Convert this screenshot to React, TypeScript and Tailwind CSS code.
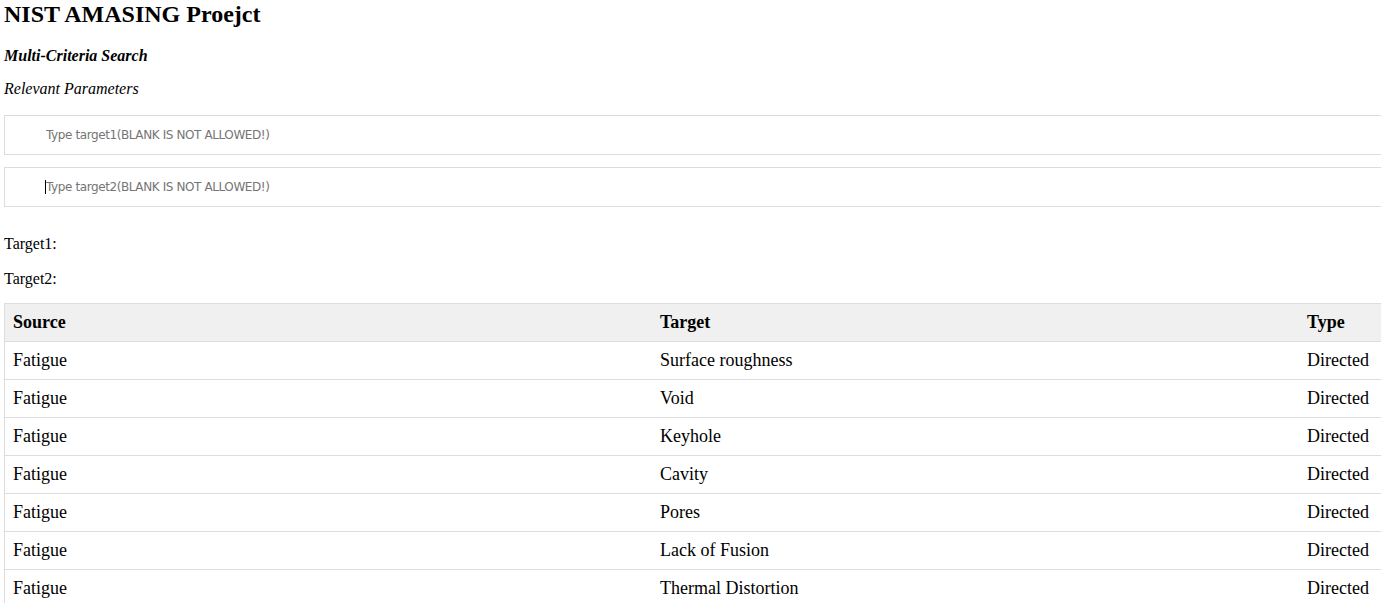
const rows: [string, string, string][] = [
  ["Fatigue", "Surface roughness", "Directed"],
  ["Fatigue", "Void", "Directed"],
  ["Fatigue", "Keyhole", "Directed"],
  ["Fatigue", "Cavity", "Directed"],
  ["Fatigue", "Pores", "Directed"],
  ["Fatigue", "Lack of Fusion", "Directed"],
  ["Fatigue", "Thermal Distortion", "Directed"],
];

const serif = "font-['Times_New_Roman','Liberation_Serif',serif]";

export default function App() {
  return (
    <div className={`w-full overflow-x-clip bg-white text-black ${serif}`}>
      <div className="w-[1400px] pl-[4px]">
        <h1 className="text-[24px] leading-[28px] font-bold">NIST AMASING Proejct</h1>

        <h4 className="mt-[19px] text-[16px] leading-[18px] font-bold italic">Multi-Criteria Search</h4>

        <p className="mt-[15px] text-[16px] leading-[18px] italic">Relevant Parameters</p>

        <input
          type="text"
          placeholder="Type target1(BLANK IS NOT ALLOWED!)"
          className="mt-[17px] block h-[40px] w-full border border-[#dcdcdc] pl-[41px] text-[12px] tracking-[-0.4px] font-['DejaVu_Sans',Tahoma,sans-serif] outline-none placeholder:text-[#757575]"
        />
        <div className="relative mt-[12px]">
          <input
            type="text"
            placeholder="Type target2(BLANK IS NOT ALLOWED!)"
            className="block h-[40px] w-full border border-[#dcdcdc] pl-[41px] text-[12px] tracking-[-0.4px] font-['DejaVu_Sans',Tahoma,sans-serif] outline-none placeholder:text-[#757575]"
          />
          {/* text caret of the focused field */}
          <span className="absolute left-[41px] top-[13px] h-[14px] w-px bg-black" />
        </div>

        <p className="mt-[28px] text-[16px] leading-[18px]">Target1:</p>
        <p className="mt-[17px] text-[16px] leading-[18px]">Target2:</p>

        <div className="mt-[15px] border-t border-l border-[#dddddd] text-[18px]">
          <div className="grid grid-cols-[647px_647px_1fr] h-[38px] items-center border-b border-[#dddddd] bg-[#f0f0f0] font-bold">
            <div className="pl-[8px]">Source</div>
            <div className="pl-[8px]">Target</div>
            <div className="pl-[8px]">Type</div>
          </div>
          {rows.map(([s, t, ty], i) => (
            <div key={i} className="grid grid-cols-[647px_647px_1fr] h-[38px] items-center border-b border-[#dddddd]">
              <div className="pl-[8px]">{s}</div>
              <div className="pl-[8px]">{t}</div>
              <div className="pl-[8px]">{ty}</div>
            </div>
          ))}
        </div>
      </div>
    </div>
  );
}
